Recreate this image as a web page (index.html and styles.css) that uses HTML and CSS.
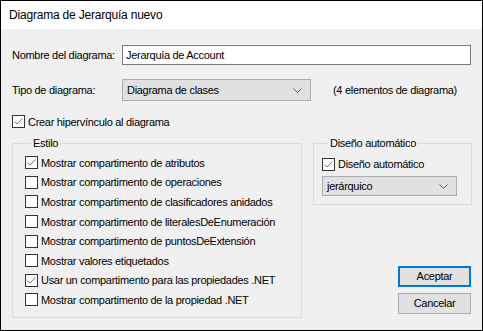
FILE: index.html
```html
<!DOCTYPE html>
<html>
<head>
<meta charset="utf-8">
<link rel="stylesheet" href="styles.css">
</head>
<body>
<div class="window">
  <div class="titlebar">Diagrama de Jerarquía nuevo</div>
  <div class="content">
    <div class="row row-name">
      <span class="label">Nombre del diagrama:</span>
      <div class="textbox">Jerarquía de Account</div>
    </div>
    <div class="row row-type">
      <span class="label">Tipo de diagrama:</span>
      <div class="combo combo-type">
        <span>Diagrama de clases</span>
        <svg class="chev" width="9" height="5" viewBox="0 0 9 5"><path d="M0.5 0.5 L4.5 4.5 L8.5 0.5" fill="none" stroke="#606060" stroke-width="1"/></svg>
      </div>
      <span class="count">(4 elementos de diagrama)</span>
    </div>
    <label class="check check-link">
      <svg class="box" width="13" height="13" viewBox="0 0 13 13"><rect x="0.5" y="0.5" width="12" height="12" fill="#fff" stroke="#333"/><path d="M2.5 6.5 L5 9 L10.5 3.5" fill="none" stroke="#777" stroke-width="1"/></svg>
      <span>Crear hipervínculo al diagrama</span>
    </label>
    <div class="lower">
      <fieldset class="group group-style">
        <legend>Estilo</legend>
        <label class="check item">
          <svg class="box" width="13" height="13" viewBox="0 0 13 13"><rect x="0.5" y="0.5" width="12" height="12" fill="#fff" stroke="#333"/><path d="M2.5 6.5 L5 9 L10.5 3.5" fill="none" stroke="#777" stroke-width="1"/></svg>
          <span>Mostrar compartimento de atributos</span>
        </label>
        <label class="check item">
          <svg class="box" width="13" height="13" viewBox="0 0 13 13"><rect x="0.5" y="0.5" width="12" height="12" fill="#fff" stroke="#333"/></svg>
          <span>Mostrar compartimento de operaciones</span>
        </label>
        <label class="check item">
          <svg class="box" width="13" height="13" viewBox="0 0 13 13"><rect x="0.5" y="0.5" width="12" height="12" fill="#fff" stroke="#333"/></svg>
          <span>Mostrar compartimento de clasificadores anidados</span>
        </label>
        <label class="check item">
          <svg class="box" width="13" height="13" viewBox="0 0 13 13"><rect x="0.5" y="0.5" width="12" height="12" fill="#fff" stroke="#333"/></svg>
          <span>Mostrar compartimento de literalesDeEnumeración</span>
        </label>
        <label class="check item">
          <svg class="box" width="13" height="13" viewBox="0 0 13 13"><rect x="0.5" y="0.5" width="12" height="12" fill="#fff" stroke="#333"/></svg>
          <span>Mostrar compartimento de puntosDeExtensión</span>
        </label>
        <label class="check item">
          <svg class="box" width="13" height="13" viewBox="0 0 13 13"><rect x="0.5" y="0.5" width="12" height="12" fill="#fff" stroke="#333"/></svg>
          <span>Mostrar valores etiquetados</span>
        </label>
        <label class="check item">
          <svg class="box" width="13" height="13" viewBox="0 0 13 13"><rect x="0.5" y="0.5" width="12" height="12" fill="#fff" stroke="#333"/><path d="M2.5 6.5 L5 9 L10.5 3.5" fill="none" stroke="#777" stroke-width="1"/></svg>
          <span>Usar un compartimento para las propiedades .NET</span>
        </label>
        <label class="check item">
          <svg class="box" width="13" height="13" viewBox="0 0 13 13"><rect x="0.5" y="0.5" width="12" height="12" fill="#fff" stroke="#333"/></svg>
          <span>Mostrar compartimento de la propiedad .NET</span>
        </label>
      </fieldset>
      <div class="side">
        <fieldset class="group group-auto">
          <legend>Diseño automático</legend>
          <label class="check auto-check">
            <svg class="box" width="13" height="13" viewBox="0 0 13 13"><rect x="0.5" y="0.5" width="12" height="12" fill="#fff" stroke="#333"/><path d="M2.5 6.5 L5 9 L10.5 3.5" fill="none" stroke="#777" stroke-width="1"/></svg>
            <span>Diseño automático</span>
          </label>
          <div class="combo combo-auto">
            <span>jerárquico</span>
            <svg class="chev" width="9" height="5" viewBox="0 0 9 5"><path d="M0.5 0.5 L4.5 4.5 L8.5 0.5" fill="none" stroke="#606060" stroke-width="1"/></svg>
          </div>
        </fieldset>
        <div class="buttons">
          <div class="btn btn-default">Aceptar</div>
          <div class="btn">Cancelar</div>
        </div>
      </div>
    </div>
  </div>
</div>
</body>
</html>
```
FILE: styles.css
```css
* { box-sizing: border-box; }
html, body { margin: 0; padding: 0; background: #f0f0f0; }
body {
  font-family: "Liberation Sans", Arial, sans-serif;
  font-size: 11px;
  letter-spacing: -0.3px;
  color: #000;
}
.window {
  width: 483px;
  height: 331px;
  border: 1px solid #000;
  background: #f0f0f0;
  display: flex;
  flex-direction: column;
}
.titlebar {
  height: 28px;
  background: #fff;
  font-size: 12px;
  letter-spacing: -0.2px;
  line-height: 28px;
  padding-left: 8px;
}
.content {
  flex: 1;
  padding: 16px 0 0 11px;
  display: flex;
  flex-direction: column;
}
.row { display: flex; align-items: center; }
.label { width: 110px; }
.textbox {
  width: 349px;
  height: 20px;
  border: 1px solid #7a7a7a;
  background: #fff;
  padding-left: 3px;
  line-height: 18px;
}
.row-type { margin-top: 14px; }
.combo {
  display: flex;
  align-items: center;
  justify-content: space-between;
  border: 1px solid #adadad;
  background: #e1e1e1;
  padding: 0 8px 0 4px;
}
.combo-type { width: 189px; height: 22px; }
.count { margin-left: 22px; }
.check { display: flex; align-items: center; }
.check .box { flex: none; margin-right: 3px; }
.check-link { margin-top: 14px; height: 13px; }
.lower { display: flex; margin-top: 9px; }
.group {
  margin: 0;
  border: 1px solid #dcdcdc;
  padding: 0;
}
.group legend {
  padding: 0 2px;
  margin-left: 6px;
  line-height: 13px;
}
.group-style {
  width: 290px;
  height: 181px;
  padding: 3px 0 0 12px;
}
.item { height: 19.6px; }
.side {
  margin-left: 11px;
  width: 159px;
  display: flex;
  flex-direction: column;
}
.group-auto {
  height: 68px;
  padding: 5px 0 0 8px;
}
.auto-check { height: 18px; }
.combo-auto { width: 135px; height: 20px; margin-top: 3px; }
.buttons {
  display: flex;
  flex-direction: column;
  align-items: flex-end;
  margin-top: 61px;
  padding-right: 1px;
  gap: 6px;
}
.btn {
  width: 73px;
  height: 21px;
  border: 1px solid #adadad;
  background: #e1e1e1;
  text-align: center;
  line-height: 19px;
}
.btn-default {
  border: 2px solid #0078d7;
  line-height: 17px;
}
```
